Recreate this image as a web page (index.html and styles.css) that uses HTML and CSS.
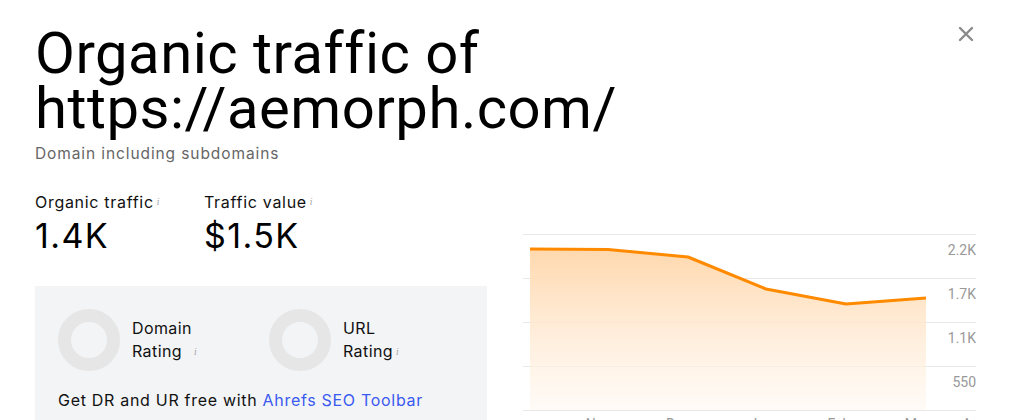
FILE: index.html
```html
<!DOCTYPE html>
<html>
<head>
<meta charset="utf-8">
<link rel="stylesheet" href="styles.css">
</head>
<body>
<div class="modal">
  <header class="head">
    <div class="titles">
      <h1 class="title">Organic traffic of<br>https://aemorph.com/</h1>
      <p class="sub">Domain including subdomains</p>
    </div>
    <button class="close" aria-label="Close">
      <svg width="16" height="16" viewBox="0 0 16 16"><path d="M2 2L14 14M14 2L2 14" stroke="#8a8a8a" stroke-width="2.4" stroke-linecap="round"/></svg>
    </button>
  </header>
  <div class="body">
    <div class="left">
      <div class="metrics">
        <div class="metric m1">
          <div class="label">Organic traffic<span class="info">i</span></div>
          <div class="value">1.4K</div>
        </div>
        <div class="metric">
          <div class="label">Traffic value<span class="info">i</span></div>
          <div class="value">$1.5K</div>
        </div>
      </div>
      <div class="box">
        <div class="ratings">
          <div class="rating r1">
            <div class="ring"></div>
            <div class="rlabel">Domain<br>Rating<span class="info sp">i</span></div>
          </div>
          <div class="rating">
            <div class="ring"></div>
            <div class="rlabel">URL<br>Rating<span class="info">i</span></div>
          </div>
        </div>
        <p class="promo">Get DR and UR free with <a href="#" class="link">Ahrefs SEO Toolbar</a></p>
      </div>
    </div>
    <div class="chart">
      <svg width="470" height="190" viewBox="0 0 470 190">
        <defs>
          <linearGradient id="g" x1="0" y1="0" x2="0" y2="1">
            <stop offset="0" stop-color="#ffd8ad"/>
            <stop offset="1" stop-color="#fff8f1" stop-opacity="0.6"/>
          </linearGradient>
        </defs>
        <g stroke="#e8e8e8" stroke-width="1">
          <line x1="0" y1="4.5" x2="453" y2="4.5"/>
          <line x1="0" y1="48.5" x2="453" y2="48.5"/>
          <line x1="0" y1="92.5" x2="453" y2="92.5"/>
          <line x1="0" y1="136.5" x2="453" y2="136.5"/>
          <line x1="0" y1="180.5" x2="453" y2="180.5"/>
        </g>
        <path d="M7 19 L85 19.5 L165 27 L243 59 L323 74 L403 68 L403 180 L7 180 Z" fill="url(#g)"/>
        <path d="M7 19 L85 19.5 L165 27 L243 59 L323 74 L403 68" fill="none" stroke="#ff8a00" stroke-width="3" stroke-linejoin="round"/>
        <g class="ylab" text-anchor="end">
          <text x="453" y="25">2.2K</text>
          <text x="453" y="69">1.7K</text>
          <text x="453" y="113">1.1K</text>
          <text x="453" y="157">550</text>
        </g>
        <g class="xlab" text-anchor="middle">
          <text x="75" y="199">Nov</text>
          <text x="155" y="199">Dec</text>
          <text x="238" y="199">Jan</text>
          <text x="316" y="199">Feb</text>
          <text x="394" y="199">Mar</text>
          <text x="450" y="199">Apr</text>
        </g>
      </svg>
    </div>
  </div>
</div>
</body>
</html>
```
FILE: styles.css
```css
html, body {
  margin: 0;
  padding: 0;
  background: #fff;
  overflow: hidden;
}
body {
  font-family: Inter, "Liberation Sans", sans-serif;
  color: #000;
}
.modal {
  width: 1024px;
  height: 420px;
  box-sizing: border-box;
  padding: 26px 40px 0 35px;
}
.head {
  display: flex;
  justify-content: space-between;
  align-items: flex-start;
}
.title {
  margin: 0;
  font-family: Roboto, sans-serif;
  font-weight: 400;
  font-size: 58px;
  line-height: 55px;
  letter-spacing: 0.5px;
}
.sub {
  margin: 8px 0 0;
  font-size: 15.5px;
  letter-spacing: 0.9px;
  color: #666;
}
.close {
  border: 0;
  background: none;
  padding: 0;
  margin: 0 10px 0 0;
  width: 16px;
  height: 16px;
  cursor: pointer;
}
.close svg { display: block; }
.body {
  display: flex;
  justify-content: space-between;
  margin-top: 30px;
}
.left {
  width: 452px;
}
.metrics {
  display: flex;
}
.metric.m1 {
  width: 169px;
}
.label {
  font-size: 16px;
  line-height: 18px;
  letter-spacing: 0.7px;
  color: #111;
}
.info {
  font-size: 9px;
  color: #aaa;
  vertical-align: top;
  margin-left: 3px;
  letter-spacing: 0;
  font-family: "DejaVu Serif", serif;
  font-style: italic;
}
.info.sp { margin-left: 12px; vertical-align: middle; }
.value {
  font-size: 34px;
  line-height: 40px;
  letter-spacing: 1.4px;
  margin-top: 5px;
}
.box {
  background: #f3f4f6;
  margin-top: 30px;
  height: 140px;
  padding: 23px 0 0 23px;
  box-sizing: border-box;
}
.ratings {
  display: flex;
}
.rating {
  display: flex;
  align-items: center;
  gap: 12px;
}
.rating.r1 { width: 211px; }
.ring {
  width: 36px;
  height: 36px;
  border: 13px solid #e6e6e6;
  border-radius: 50%;
}
.rlabel {
  font-size: 16px;
  line-height: 23px;
  letter-spacing: 0.4px;
  color: #111;
}
.rlabel .info { vertical-align: 2px; }
.promo {
  margin: 19px 0 0;
  font-size: 16px;
  letter-spacing: 0.7px;
  color: #111;
}
.link {
  color: #3a5af0;
  text-decoration: none;
}
.chart {
  margin-top: 37px;
  margin-right: -9px;
}
.chart svg { display: block; }
.ylab text, .xlab text {
  font-family: Roboto, sans-serif;
  font-size: 14px;
  fill: #999;
}
```
